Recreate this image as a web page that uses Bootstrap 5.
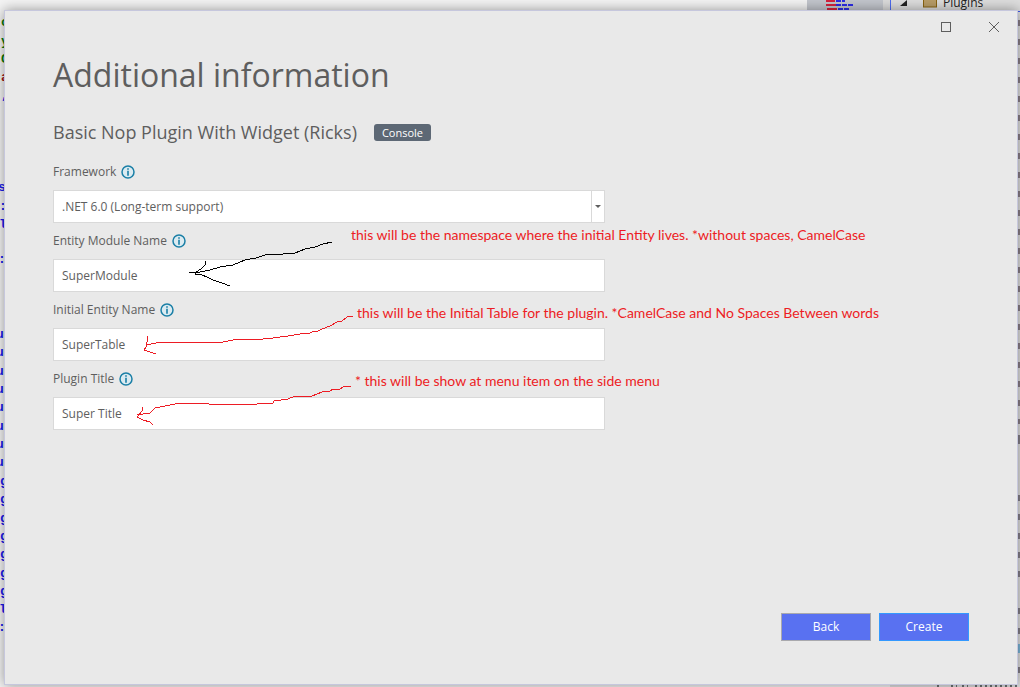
<!DOCTYPE html>
<html lang="en">
<head>
<meta charset="utf-8">
<meta name="viewport" content="width=device-width, initial-scale=1">
<title>Additional information</title>
<link href="https://cdn.jsdelivr.net/npm/bootstrap@5.3.0/dist/css/bootstrap.min.css" rel="stylesheet">
<style>
  body { font-family: "Open Sans", "Noto Sans", sans-serif; font-size: 12px; line-height: 20px; color: #5e5e5e; background: #f4f4f4; }
  .shell { padding: 10px 2px 2px 4px; isolation: isolate; }
  .backdrop { z-index: -1; }
  .edge-top, .edge-left, .edge-right, .edge-bottom { position: absolute; }
  .edge-top { top: 0; right: 0; }
  .edge-left { top: 0; left: 0; }
  .edge-right { top: 0; right: 0; }
  .edge-bottom { right: 0; bottom: 0; }
  .dialog-window { background: #e9e9e9; border: 1px solid #c6c7dd; box-shadow: 0 0 12px rgba(0,0,0,.4); }
  .win-controls { gap: 2px; }
  .win-btn { width: 46px; height: 32px; color: #5e5e5e; background: transparent; border: 0; }
  .dialog-main { padding: 8px 48px 0; }
  .dialog-title { font-size: 32px; line-height: 48px; font-weight: 400; color: #5e5e5e; margin-bottom: 19px; }
  .template-name { font-size: 18px; line-height: 28px; font-weight: 400; }
  .template-row { gap: 17px; margin-bottom: 16px; }
  .tag { font-size: 11px; line-height: 17px; font-weight: 400; padding: 0 8px; border-radius: 3px; background: #5d6875; }
  .fields { max-width: 552px; }
  .field { margin-bottom: 8px; }
  .field-head { gap: 5px; margin-bottom: 8px; }
  .field .form-control, .field .form-select { height: 33px; padding: 0 8px; font-size: 12px; line-height: 20px; color: #5e5e5e; border: 1px solid #d9d9d9; border-radius: 0; background: #fff; }
  .select-box::after { content: ""; position: absolute; right: 4px; top: 15px; border: 3px solid transparent; border-top-color: #5e5e5e; border-bottom: 0; }
  .select-box::before { content: ""; position: absolute; right: 13px; top: 1px; bottom: 1px; width: 1px; background: #d9d9d9; }
  .arrow-ink { position: absolute; left: 0; top: 0; overflow: visible; pointer-events: none; z-index: 2; fill: none; stroke: #ed1c24; shape-rendering: crispEdges; }
  .arrow-ink.dark { stroke: #000; }
  .remark { position: absolute; z-index: 2; font-family: Lato, sans-serif; font-size: 14px; color: #ed1c24; white-space: nowrap; }
  .remark-a { left: 298px; top: -6px; }
  .remark-b { left: 304px; top: 3px; }
  .remark-c { left: 302px; top: 2px; }
  .dialog-foot { padding: 0 48px 43px; }
  .act { width: 90px; height: 28px; padding: 0; font-size: 12px; line-height: 20px; border-radius: 0; color: #fff; background: #5971f1; border: 1px solid #a9a9ad; }
  .act-main { border-color: #3399ff; }
</style>
</head>
<body>
<div class="shell position-relative d-flex flex-column min-vh-100">

  <div class="backdrop position-absolute top-0 start-0 w-100 h-100 overflow-hidden" aria-hidden="true">
    <svg class="edge-right" width="130" height="100%"><rect width="130" height="100%" fill="#dedede"/></svg>
    <!-- code behind the left edge -->
    <svg class="edge-left" width="6" height="687" font-family="Liberation Mono" font-size="13" font-weight="bold">
      <g fill="#0a7a0a"><text x="1" y="26">c</text><text x="1" y="45">y</text><text x="1" y="63">C</text></g>
      <text x="1" y="81" fill="#a31515">a</text>
      <g fill="#1a1aee">
        <text x="1" y="99">,</text><text x="-2" y="191">s</text><text x="-1" y="210">:</text><text x="-1" y="228">l</text><text x="-2" y="263">:</text>
        <text x="-4" y="338">u</text><text x="-4" y="356">u</text><text x="-4" y="375">u</text><text x="-4" y="393">u</text><text x="-4" y="411">u</text><text x="-4" y="430">u</text><text x="-4" y="448">u</text><text x="-4" y="466">u</text>
        <text x="0" y="485">g</text><text x="0" y="503">g</text><text x="0" y="522">g</text><text x="0" y="540">g</text><text x="0" y="558">g</text><text x="0" y="577">g</text><text x="0" y="595">g</text>
        <text x="-1" y="613">l</text><text x="-2" y="631">:</text>
      </g>
    </svg>
    <!-- code map and solution tree behind the top edge -->
    <svg class="edge-top" width="213" height="10">
      <rect width="76" height="10" fill="#c3c6cd"/><rect x="76" width="7" height="10" fill="#dcdcdc"/>
      <path d="M19 1h9M19 5h10M20 9h10" stroke="#d5223c" stroke-width="2"/>
      <path d="M29 1h9M29 5h18M31 9h12" stroke="#2c2ce6" stroke-width="2" stroke-dasharray="5 1"/>
      <path d="M83.500 0v10" stroke="#4d6bf0"/>
      <path d="M100 6V0L93 6z" fill="#222"/>
      <rect x="116.500" y="-4" width="13" height="11" fill="#b89d68" stroke="#8a6410"/>
      <text x="136" y="7" font-family="Open Sans" font-size="12" fill="#222">Plugins</text>
    </svg>
    <svg class="edge-right" width="2" height="687">
      <path d="M0 11.500h2" stroke="#3f59f0"/>
      <path d="M1 20v404" stroke="#8a7f88" stroke-width="2" stroke-dasharray="6 13"/>
      <path d="M1 435v9M1 495v6M1 514v6M1 533v6M1 552v6M1 571v6M1 608v6M1 628v6M1 667v6" stroke="#85808a" stroke-width="2"/>
      <path d="M1 644v9" stroke="#7ab5d8" stroke-width="2"/>
    </svg>
    <svg class="edge-bottom" width="85" height="2">
      <path d="M2 1h4M16 1h6M27 1h6M40 1h43" stroke="#6c7270" stroke-width="2" stroke-dasharray="2 3"/>
    </svg>
  </div>

  <main class="dialog-window flex-grow-1 d-flex flex-column">
    <div class="win-controls d-flex justify-content-end">
      <button type="button" class="win-btn btn p-0 rounded-0 d-flex align-items-center justify-content-center" aria-label="Maximize">
        <svg width="10" height="10" fill="none" stroke="currentColor"><rect x=".5" y=".5" width="9" height="9"/></svg>
      </button>
      <button type="button" class="win-btn btn p-0 rounded-0 d-flex align-items-center justify-content-center" aria-label="Close">
        <svg width="10" height="10" fill="none" stroke="currentColor"><path d="M0 0l10 10M10 0L0 10"/></svg>
      </button>
    </div>

    <form class="flex-grow-1 d-flex flex-column">
      <div class="dialog-main flex-grow-1">
        <h1 class="dialog-title">Additional information</h1>
        <div class="template-row d-flex align-items-center">
          <h2 class="template-name mb-0">Basic Nop Plugin With Widget (Ricks)</h2>
          <span class="tag badge">Console</span>
        </div>

        <svg class="d-none">
          <symbol id="info" viewBox="0 0 14 14">
            <circle cx="7" cy="7" r="6" fill="#dcebf1" stroke="#1a7fa6" stroke-width="1.500"/>
            <path d="M6.200 3.200h1.600v1.500H6.200zM6.200 5.800h1.600v5H6.200z" fill="#1a7fa6"/>
          </symbol>
        </svg>

        <div class="fields">
          <div class="field">
            <div class="field-head d-flex align-items-center">
              <label for="framework">Framework</label>
              <svg width="14" height="14" role="img" aria-label="Info"><use href="#info"/></svg>
            </div>
            <div class="select-box position-relative">
              <select id="framework" class="form-select"><option>.NET 6.0 (Long-term support)</option></select>
            </div>
          </div>

          <div class="field position-relative">
            <div class="field-head d-flex align-items-center">
              <label for="module">Entity Module Name</label>
              <svg width="14" height="14" role="img" aria-label="Info"><use href="#info"/></svg>
            </div>
            <input id="module" type="text" class="form-control" value="SuperModule">
            <svg class="arrow-ink dark" width="300" height="60" aria-hidden="true">
              <path d="M279 11L270 13L262 16L252 18L242 22L230 23L212 24L203 27L192 29L180 34L167 36L157 39L147 41L136 42M153 30L152 34L148 38L143 41L142 43L149 44L154 46L160 49L169 52L177 55"/>
            </svg>
            <span class="remark remark-a">this will be the namespace where the initial Entity lives. *without spaces, CamelCase</span>
          </div>

          <div class="field position-relative">
            <div class="field-head d-flex align-items-center">
              <label for="entity">Initial Entity Name</label>
              <svg width="14" height="14" role="img" aria-label="Info"><use href="#info"/></svg>
            </div>
            <input id="entity" type="text" class="form-control" value="SuperTable">
            <svg class="arrow-ink" width="300" height="60" aria-hidden="true">
              <path d="M300 16L294 17L289 21L284 22L277 26L269 29L265 31L259 32L257 33L247 34L235 36L220 38L210 39L194 39L180 40L170 42L109 42L98 44L94 45M95 36L94 42L93 47L91 50L97 52L103 54"/>
            </svg>
            <span class="remark remark-b">this will be the Initial Table for the plugin. *CamelCase and No Spaces Between words</span>
          </div>

          <div class="field position-relative">
            <div class="field-head d-flex align-items-center">
              <label for="plugin-title">Plugin Title</label>
              <svg width="14" height="14" role="img" aria-label="Info"><use href="#info"/></svg>
            </div>
            <input id="plugin-title" type="text" class="form-control" value="Super Title">
            <svg class="arrow-ink" width="300" height="60" aria-hidden="true">
              <path d="M298 17L290 18L287 20L280 20L277 22L269 23L259 27L242 27L235 30L221 32L220 34L204 35L156 35L151 34L127 34L112 37L102 39L97 44L84 46M90 38L89 42L84 48L90 51L97 53L100 56"/>
            </svg>
            <span class="remark remark-c">* this will be show at menu item on the side menu</span>
          </div>
        </div>
      </div>

      <div class="dialog-foot d-flex justify-content-end gap-2">
        <button type="button" class="btn act">Back</button>
        <button type="button" class="btn act act-main">Create</button>
      </div>
    </form>
  </main>
</div>
<script src="https://cdn.jsdelivr.net/npm/bootstrap@5.3.0/dist/js/bootstrap.bundle.min.js"></script>
</body>
</html>
